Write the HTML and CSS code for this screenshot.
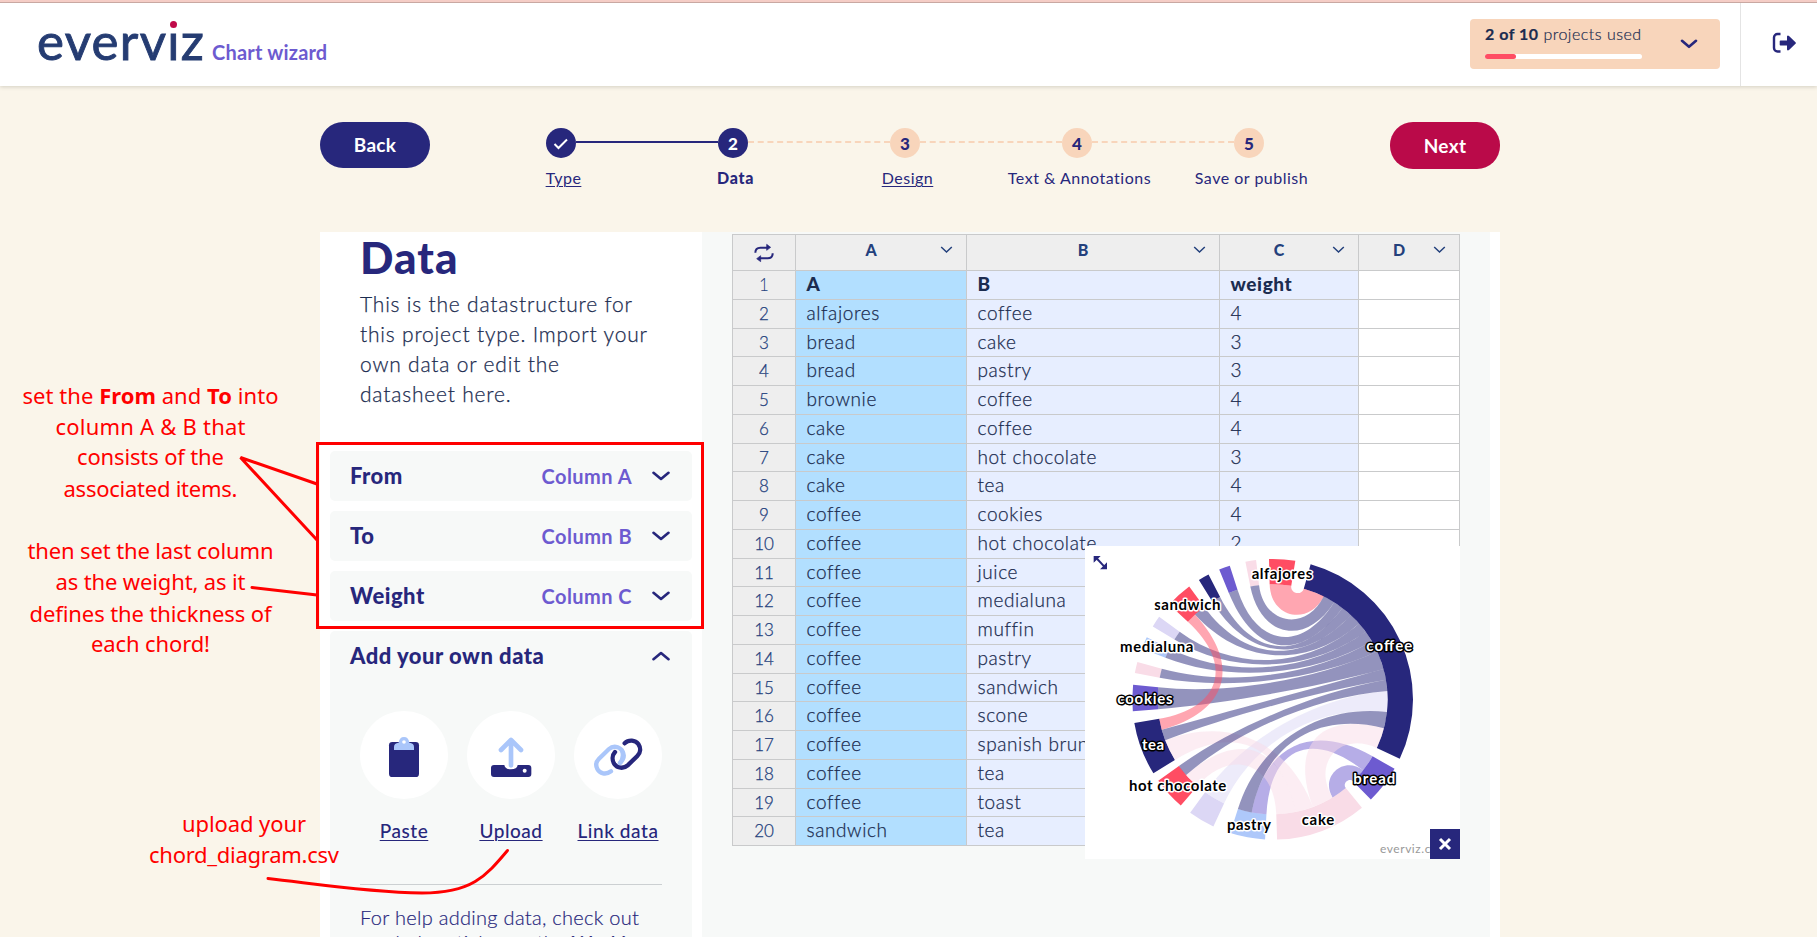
FILE: index.html
```html
<!DOCTYPE html>
<html lang="en">
<head>
<meta charset="utf-8">
<title>everviz Chart wizard</title>
<link rel="stylesheet" href="styles.css">
</head>
<body>
<header class="topbar">
  <div class="brand"><span class="logo">everv<span class="logo-i">i</span>z</span><span class="product">Chart wizard</span></div>
  <div class="topbar-right">
    <div class="quota">
      <div class="quota-info">
        <div class="quota-text"><b>2 of 10</b> projects used</div>
        <div class="quota-track"><div class="quota-fill"></div></div>
      </div>
      <svg class="quota-chevron" width="18" height="10" viewBox="0 0 18 10"><path class="chev" d="M2 1.8 9 7.8 16 1.8"/></svg>
    </div>
    <div class="logout">
      <svg width="24" height="22" viewBox="0 0 24 22"><path d="M8.5 2H5.5A3.5 3.5 0 0 0 2 5.500V16a3.500 3.500 0 0 0 3.500 3.500h3" fill="none" stroke="#27277c" stroke-width="2.400"/><path d="M8.500 8.500h6.500V4.500q.5-1.500 2-.5l6.500 6.200q.8.800 0 1.600L17 18q-1.500 1-2-.5v-4H8.500q-.8 0-.8-.8V9.300q0-.8.800-.8z" fill="#27277c"/></svg>
    </div>
  </div>
</header>

<nav class="wizard-nav">
  <button class="btn btn-back">Back</button>
  <ol class="steps">
    <li class="step done"><span class="dot"><svg width="16" height="12" viewBox="0 0 16 12"><path d="M1.500 6 5.500 10 14 1.500" fill="none" stroke="#fff" stroke-width="2"/></svg></span><span class="step-label link">Type</span></li>
    <li class="step current"><span class="dot">2</span><span class="step-label">Data</span></li>
    <li class="step"><span class="dot">3</span><span class="step-label link">Design</span></li>
    <li class="step"><span class="dot">4</span><span class="step-label">Text &amp; Annotations</span></li>
    <li class="step"><span class="dot">5</span><span class="step-label">Save or publish</span></li>
  </ol>
  <button class="btn btn-next">Next</button>
</nav>

<main class="workspace">
  <section class="settings">
    <h1>Data</h1>
    <p class="intro">This is the datastructure for<br>this project type. Import your<br>own data or edit the<br>datasheet here.</p>
    <div class="mapping"><span class="mapping-name">From</span><span class="mapping-value">Column A</span><svg width="18" height="10" viewBox="0 0 18 10"><path class="chev" d="M1.500 1.800 9 8 16.500 1.800"/></svg></div>
    <div class="mapping"><span class="mapping-name">To</span><span class="mapping-value">Column B</span><svg width="18" height="10" viewBox="0 0 18 10"><path class="chev" d="M1.500 1.800 9 8 16.500 1.800"/></svg></div>
    <div class="mapping"><span class="mapping-name">Weight</span><span class="mapping-value">Column C</span><svg width="18" height="10" viewBox="0 0 18 10"><path class="chev" d="M1.500 1.800 9 8 16.500 1.800"/></svg></div>
    <div class="own-data">
      <div class="own-head"><span class="mapping-name">Add your own data</span><svg width="18" height="10" viewBox="0 0 18 10"><path class="chev" d="M1.500 8.200 9 2 16.500 8.200"/></svg></div>
      <div class="actions">
        <div class="action"><span class="action-icon"><svg width="88" height="88" viewBox="0 0 264 264"><rect x="87" y="93" width="90" height="105" rx="10" fill="#27277c"/><path d="M102 117v-9q0-12 14-13 2-17 16-17t16 17q14 1 14 13v9z" fill="#aac6fa"/><circle cx="132" cy="93" r="5.500" fill="#fff"/></svg></span><span class="action-label link">Paste</span></div>
        <div class="action"><span class="action-icon"><svg width="88" height="88" viewBox="0 0 264 264"><path d="M81 162h31q2 13 20 13t20-13h32q9 0 9 9v18q0 9-9 9H81q-9 0-9-9v-18q0-9 9-9z" fill="#27277c"/><circle cx="173" cy="179" r="6" fill="#fff"/><path d="M132 163V89M102 117l30-30 30 30" fill="none" stroke="#aac6fa" stroke-width="14" stroke-linecap="round" stroke-linejoin="round"/></svg></span><span class="action-label link">Upload</span></div>
        <div class="action"><span class="action-icon"><svg width="88" height="88" viewBox="0 0 264 264" fill="none" stroke-width="13" stroke-linecap="round"><path d="M111 181c-16 12-34 6-41-7-6-12-3-23 5-31l30-29c12-11 30-8 39 4 8 12 6 26-6 38" stroke="#aac6fa"/><path d="M152 97c12-12 32-10 41 2 8 12 7 26-3 36l-29 28c-12 11-31 9-40-4-7-11-7-26 2-36" stroke="#27277c"/><path d="M145 122c3 11 2 23-7 34" stroke="#aac6fa"/></svg></span><span class="action-label link">Link data</span></div>
      </div>
      <hr class="rule">
      <p class="help">For help adding data, check out<br>our help articles on the <b>Working</b></p>
    </div>
  </section>

  <section class="sheet-area">
    <div class="sheet" id="sheet">
      <div class="row head">
        <div class="c0"><svg width="20" height="20" viewBox="0 0 60 60" fill="none" stroke="#27277c" stroke-width="6"><path d="M4 29q0-15 15-15h22M56 31q0 15-15 15H18"/><path d="M38 4v18l12-9zM20 38v18l-12-9z" fill="#27277c" stroke-width="2"/></svg></div>
        <div class="ca"><span>A</span><svg width="13" height="8" viewBox="0 0 13 8"><path class="thin" d="M1.200 1 6.500 6 11.800 1"/></svg></div>
        <div class="cb"><span>B</span><svg width="13" height="8" viewBox="0 0 13 8"><path class="thin" d="M1.200 1 6.500 6 11.800 1"/></svg></div>
        <div class="cc"><span>C</span><svg width="13" height="8" viewBox="0 0 13 8"><path class="thin" d="M1.200 1 6.500 6 11.800 1"/></svg></div>
        <div class="cd"><span>D</span><svg width="13" height="8" viewBox="0 0 13 8"><path class="thin" d="M1.200 1 6.500 6 11.800 1"/></svg></div>
      </div>
    </div>
    <div class="preview">
      <svg class="chord" id="chord" width="375" height="313" viewBox="15 18 1125 939"></svg>
      <span class="credit">everviz.com</span>
      <button class="close"><svg width="14" height="14" viewBox="0 0 14 14"><path d="M2 2 12 12M12 2 2 12" stroke="#fff" stroke-width="3"/></svg></button>
    </div>
  </section>
</main>

<svg class="notes" width="1817" height="937" viewBox="0 0 1817 937">
  <g fill="none" stroke="#f00" stroke-width="3" stroke-linecap="round">
    <rect x="317.500" y="443.500" width="385" height="184" stroke-linecap="butt"/>
    <path d="M317 484 240.500 457.500 317 540"/>
    <path d="M252 587.500 317 595"/>
    <path d="M268 878.500C310 883 365 892 422 893C472 893 486 876 507.500 850.500"/>
  </g>
  <g class="note-text">
    <text x="150.500" y="404" textLength="256">set the <tspan class="strong">From</tspan> and <tspan class="strong">To</tspan> into</text>
    <text x="150.500" y="435" textLength="190">column A &amp; B that</text>
    <text x="150.500" y="465" textLength="147">consists of the</text>
    <text x="150.500" y="496.500" textLength="174">associated items.</text>
    <text x="150.500" y="559" textLength="246">then set the last column</text>
    <text x="150.500" y="590" textLength="190">as the weight, as it</text>
    <text x="150.500" y="621.500" textLength="242">defines the thickness of</text>
    <text x="150.500" y="651.500" textLength="119">each chord!</text>
    <text x="244" y="832" textLength="124">upload your</text>
    <text x="244" y="863" textLength="190">chord_diagram.csv</text>
  </g>
</svg>
<script src="app.js"></script>
</body>
</html>
```

FILE: styles.css
```css
* { box-sizing: border-box; }
body { margin: 0; width: 1817px; height: 937px; overflow: hidden; position: relative; background: #faf5ea; font-family: Lato, "Open Sans", sans-serif; color: #27277c; }
h1, p, ol { margin: 0; padding: 0; }
svg { display: block; flex: none; }
button { border: 0; font-family: inherit; padding: 0; }
.link { text-decoration: underline; text-underline-offset: 2px; text-decoration-thickness: 1px; }
.chev { fill: none; stroke: #27277c; stroke-width: 2.6; stroke-linecap: round; stroke-linejoin: round; }
.thin { fill: none; stroke: #23407c; stroke-width: 1.5; }

.topbar { height: 86px; border-top: 3px solid #f5cdc6; background: #fff; box-shadow: 0 1px 4px rgba(60, 60, 40, .2); display: flex; justify-content: space-between; position: relative; }
.topbar::before { content: ""; position: absolute; left: 0; right: 0; top: -1px; height: 1px; background: #c9a8a2; }
.brand { display: flex; align-items: baseline; padding: 8px 0 0 37px; line-height: 60px; height: 80px; }
.logo { font-size: 51px; letter-spacing: 1.3px; color: #253c72; width: 175px; -webkit-text-stroke: .9px #253c72; }
.logo-i { position: relative; }
.logo-i::before { content: ""; position: absolute; width: 12px; height: 15px; background: #fff; left: 1px; top: 8px; }
.logo-i::after { content: ""; position: absolute; width: 7px; height: 7px; border-radius: 50%; background: #c00a49; left: 3px; top: 11px; }
.product { font-size: 20px; font-weight: 700; color: #6d5bd0; letter-spacing: .2px; }
.topbar-right { display: flex; }
.quota { margin: 16px 20px 0 0; width: 250px; height: 50px; border-radius: 4px; background: #f8d5bb; display: flex; justify-content: space-between; padding: 5px 22px 0 15px; }
.quota-info { width: 157px; }
.quota-text { font-size: 16px; line-height: 20px; color: #1b2c50; white-space: nowrap; font-weight: 300; letter-spacing: .5px; -webkit-text-stroke: .2px; }
.quota-text b { font-weight: 700; }
.quota-track { margin-top: 10px; height: 5px; border-radius: 3px; background: #fff; }
.quota-fill { width: 31px; height: 5px; border-radius: 3px; background: #ff4d63; }
.quota-chevron { margin-top: 15px; }
.logout { width: 77px; border-left: 1px solid #e4e4e4; padding: 29px 0 0 31px; }

.wizard-nav { display: flex; justify-content: space-between; width: 1180px; margin-left: 320px; padding-top: 36px; height: 146px; }
.btn { width: 110px; height: 46px; border-radius: 23px; background: #27277c; color: #fff; font-size: 19px; font-weight: 700; line-height: 44px; letter-spacing: .3px; }
.btn-next { height: 47px; background: #ba0a49; }
.steps { list-style: none; display: flex; width: 860px; margin: 6px 10px 0 0; }
.step { width: 172px; display: flex; flex-direction: column; align-items: center; position: relative; }
.step + .step::before { content: ""; position: absolute; right: 101px; top: 13px; width: 142px; border-top: 2px dashed #f8d5bb; }
.step.done + .step::before { border-top: 2px solid #27277c; }
.dot { width: 30px; height: 30px; border-radius: 50%; background: #f8d5bb; font-size: 17px; font-weight: 900; display: flex; align-items: center; justify-content: center; padding-top: 1px; }
.done .dot, .current .dot { background: #27277c; color: #fff; }
.step-label { font-size: 16px; line-height: 20px; margin-top: 10px; margin-left: 5px; white-space: nowrap; letter-spacing: .5px; }
.current .step-label { font-weight: 900; letter-spacing: .7px; }

.workspace { display: flex; width: 1180px; height: 705px; margin-left: 320px; background: #fff; overflow: hidden; }
.settings { width: 382px; padding: 0 10px; flex: none; }
h1 { font-size: 44px; font-weight: 900; line-height: 50px; height: 52px; padding-left: 30px; letter-spacing: 1.1px; }
.intro { font-size: 21px; font-weight: 300; line-height: 30px; color: #1b2c50; padding-left: 30px; margin: 5px 0 42px; height: 120px; letter-spacing: .8px; white-space: nowrap; -webkit-text-stroke: .25px; }
.mapping { height: 50px; margin-bottom: 10px; background: #f7f9f8; border-radius: 5px; display: flex; align-items: center; padding: 0 22px 0 20px; }
.mapping-name { font-size: 22px; font-weight: 900; flex: 1; line-height: 48px; letter-spacing: .5px; }
.mapping-value { font-size: 20px; font-weight: 700; color: #6d5bd0; margin-right: 20px; letter-spacing: .45px; }
.own-data { background: #f7f9f8; border-radius: 5px; height: 330px; padding: 0 30px; }
.own-head { display: flex; align-items: center; height: 50px; margin: 0 -8px 0 -10px; }
.actions { display: flex; justify-content: space-between; margin-top: 30px; }
.action { width: 88px; display: flex; flex-direction: column; align-items: center; }
.action-icon { width: 88px; height: 88px; border-radius: 50%; background: #fff; }
.action-label { margin-top: 19px; font-size: 19px; font-weight: 500; line-height: 26px; white-space: nowrap; letter-spacing: .55px; }
.rule { border: 0; height: 1px; background: #ccd0d2; margin: 40px 0 20px; }
.help { font-size: 20px; font-weight: 300; line-height: 25px; white-space: nowrap; letter-spacing: .3px; -webkit-text-stroke: .2px; }

.sheet-area { width: 788px; background: #f7f9f8; padding: 2px 30px 0; position: relative; flex: none; }
.sheet { width: 728px; border-left: 1px solid #c9cacb; border-top: 1px solid #c9cacb; }
.row { display: flex; height: 28.75px; font-size: 19px; font-weight: 300; line-height: 26px; color: #1b2c50; letter-spacing: .6px; -webkit-text-stroke: .25px; }
.row > div { border-right: 1px solid #c9cacb; border-bottom: 1px solid #c9cacb; white-space: nowrap; padding-left: 10.500px; flex: none; }
.row > .c0 { width: 63px; background: #eee; text-align: center; padding: 0; font-size: 17px; line-height: 28px; color: #23407c; letter-spacing: 0; }
.row > .ca { width: 171px; background: #b2dfff; }
.row > .cb { width: 253px; background: #e7eeff; }
.row > .cc { width: 139px; background: #e7eeff; }
.row > .cd { width: 101px; background: #fff; }
.row.title { font-weight: 900; -webkit-text-stroke: 0; }
.row.title .c0 { font-weight: 300; }
.row.head { height: 36px; font-size: 16px; font-weight: 900; color: #23407c; -webkit-text-stroke: 0; letter-spacing: 0; }
.row.head > div { background: #eee; display: flex; justify-content: center; align-items: center; position: relative; padding: 0 20px 5px 0; }
.row.head > .c0 { padding: 1px 0 0; }
.row.head > div:not(.c0) svg { position: absolute; right: 13px; top: 11px; }

.preview { position: absolute; left: 383px; top: 314px; width: 375px; height: 313px; background: #fff; }
.chord text { font-size: 45px; font-weight: 700; text-anchor: middle; fill: #000; stroke: #fff; stroke-width: 9px; stroke-linejoin: round; paint-order: stroke; }
.chord text.light { fill: #fff; stroke: #000; }
.credit { position: absolute; left: 295px; top: 296px; font-size: 12px; line-height: 14px; color: #999; letter-spacing: .55px; }
.close { position: absolute; right: 0; bottom: 0; width: 30px; height: 30px; background: #27277c; display: flex; align-items: center; justify-content: center; }

.notes { position: absolute; left: 0; top: 0; pointer-events: none; }
.note-text { font-family: "Noto Sans", "Open Sans", sans-serif; font-size: 22px; fill: #f00; text-anchor: middle; }
.note-text .strong { font-weight: 700; }
```

FILE: app.js
```js
var rows = [
  ["A", "B", "weight"], ["alfajores", "coffee", 4], ["bread", "cake", 3], ["bread", "pastry", 3],
  ["brownie", "coffee", 4], ["cake", "coffee", 4], ["cake", "hot chocolate", 3], ["cake", "tea", 4],
  ["coffee", "cookies", 4], ["coffee", "hot chocolate", 2], ["coffee", "juice", ""], ["coffee", "medialuna", ""],
  ["coffee", "muffin", ""], ["coffee", "pastry", ""], ["coffee", "sandwich", ""], ["coffee", "scone", ""],
  ["coffee", "spanish brunch", ""], ["coffee", "tea", ""], ["coffee", "toast", ""], ["sandwich", "tea", ""]
];
document.getElementById("sheet").insertAdjacentHTML("beforeend", rows.map(function (r, i) {
  return '<div class="row' + (i ? "" : " title") + '"><div class="c0">' + (i + 1) + '</div><div class="ca">' + r[0] +
    '</div><div class="cb">' + r[1] + '</div><div class="cc">' + r[2] + '</div><div class="cd"></div></div>';
}).join(""));

var CX = 578, CY = 478, RO = 421, RI = 345;
var navy = "#27277c", violet = "#6d5bd0", pink = "#f9dce7", red = "#ff4d63", blue = "#aec8fa", lilac = "#dcd7f5";

function pt(a, r) {
  var t = a * Math.PI / 180;
  return (CX + r * Math.sin(t)).toFixed(1) + " " + (CY - r * Math.cos(t)).toFixed(1);
}
function segment(a, b, color) {
  var big = b - a > 180 ? 1 : 0;
  return '<path fill="' + color + '" d="M' + pt(a, RO) + "A" + RO + " " + RO + " 0 " + big + " 1 " + pt(b, RO) +
    "L" + pt(b, RI) + "A" + RI + " " + RI + " 0 " + big + " 0 " + pt(a, RI) + 'Z"/>';
}
function curve(a, b) {
  var d = Math.abs(a - b) % 360;
  if (d > 180) d = 360 - d;
  var k = 1 - 0.6 * Math.min(1, d * Math.PI / 180);
  return "C" + pt(a, RI * k) + " " + pt(b, RI * k) + " " + pt(b, RI);
}
function ribbon(a, b, c, d, color) {
  var arc = "A" + RI + " " + RI + " 0 0 1 ";
  return '<path fill="' + color + '" fill-opacity=".5" d="M' + pt(a, RI) + arc + pt(b, RI) + curve(b, c) + arc + pt(d, RI) + curve(d, a) + 'Z"/>';
}
var segments = [
  [15.7, 115.1, navy], [119.7, 135.6, violet], [140.5, 178.2, pink], [183.1, 197.6, blue], [205, 216, lilac],
  [220.9, 234.6, red], [238.2, 260.3, navy], [265.1, 276, violet], [280.8, 285.4, pink], [291.2, 296.2, blue],
  [301.3, 306, lilac], [312.5, 323.5, red], [328.3, 332.8, navy], [337.6, 342.2, violet], [348.8, 353.2, pink], [358.5, 369.3, red]
];
var ribbons = [
  [358.5, 369.3, 15.7, 26.4, red], [119.7, 128.1, 183.1, 190.5, violet], [128.1, 135.6, 140.5, 148.6, violet],
  [205, 216, 85.8, 96.3, lilac], [148.6, 159.5, 104.5, 115.1, pink], [168.5, 178.2, 220.9, 228.8, pink], [159.5, 168.5, 238.2, 249.1, pink],
  [265.1, 276, 65.4, 74.7, navy], [228.8, 234.6, 80.2, 85.8, navy], [280.8, 285.4, 59.6, 65.4, navy], [291.2, 296.2, 54, 59.6, navy],
  [301.3, 306, 48.8, 54, navy], [190.5, 197.6, 96.3, 104.5, navy], [317.5, 323.5, 42.8, 48.8, navy], [328.3, 332.8, 37.4, 42.8, navy],
  [337.6, 342.2, 32.3, 37.4, navy], [249.1, 254.6, 74.7, 80.2, navy], [348.8, 353.2, 26.4, 32.3, navy], [312.5, 317.5, 254.6, 260.3, red]
];
var labels = [
  ["alfajores", 606, 117, 0, 182], ["sandwich", 322, 210, 0, 199], ["medialuna", 230, 336, 0, 220], ["cookies", 195, 493, 1, 166],
  ["tea", 219, 629, 1, 66], ["hot chocolate", 293, 753, 0, 292], ["pastry", 507, 870, 0, 132], ["cake", 714, 854, 0, 98],
  ["bread", 883, 732, 1, 126], ["coffee", 928, 333, 1, 138]
];
var out = segments.map(function (s) { return segment(s[0], s[1], s[2]); }).join("") +
  ribbons.map(function (r) { return ribbon(r[0], r[1], r[2], r[3], r[4]); }).join("") +
  labels.map(function (l) {
    return '<text x="' + l[1] + '" y="' + l[2] + '" textLength="' + l[4] + '"' + (l[3] ? ' class="light"' : "") + ">" + l[0] + "</text>";
  }).join("") +
  '<path d="M49 54 73 80" stroke="#27277c" stroke-width="6"/><path d="M41 48h21L41 68zM81 88H60L81 67z" fill="#27277c"/>';
document.getElementById("chord").innerHTML = out;
```
